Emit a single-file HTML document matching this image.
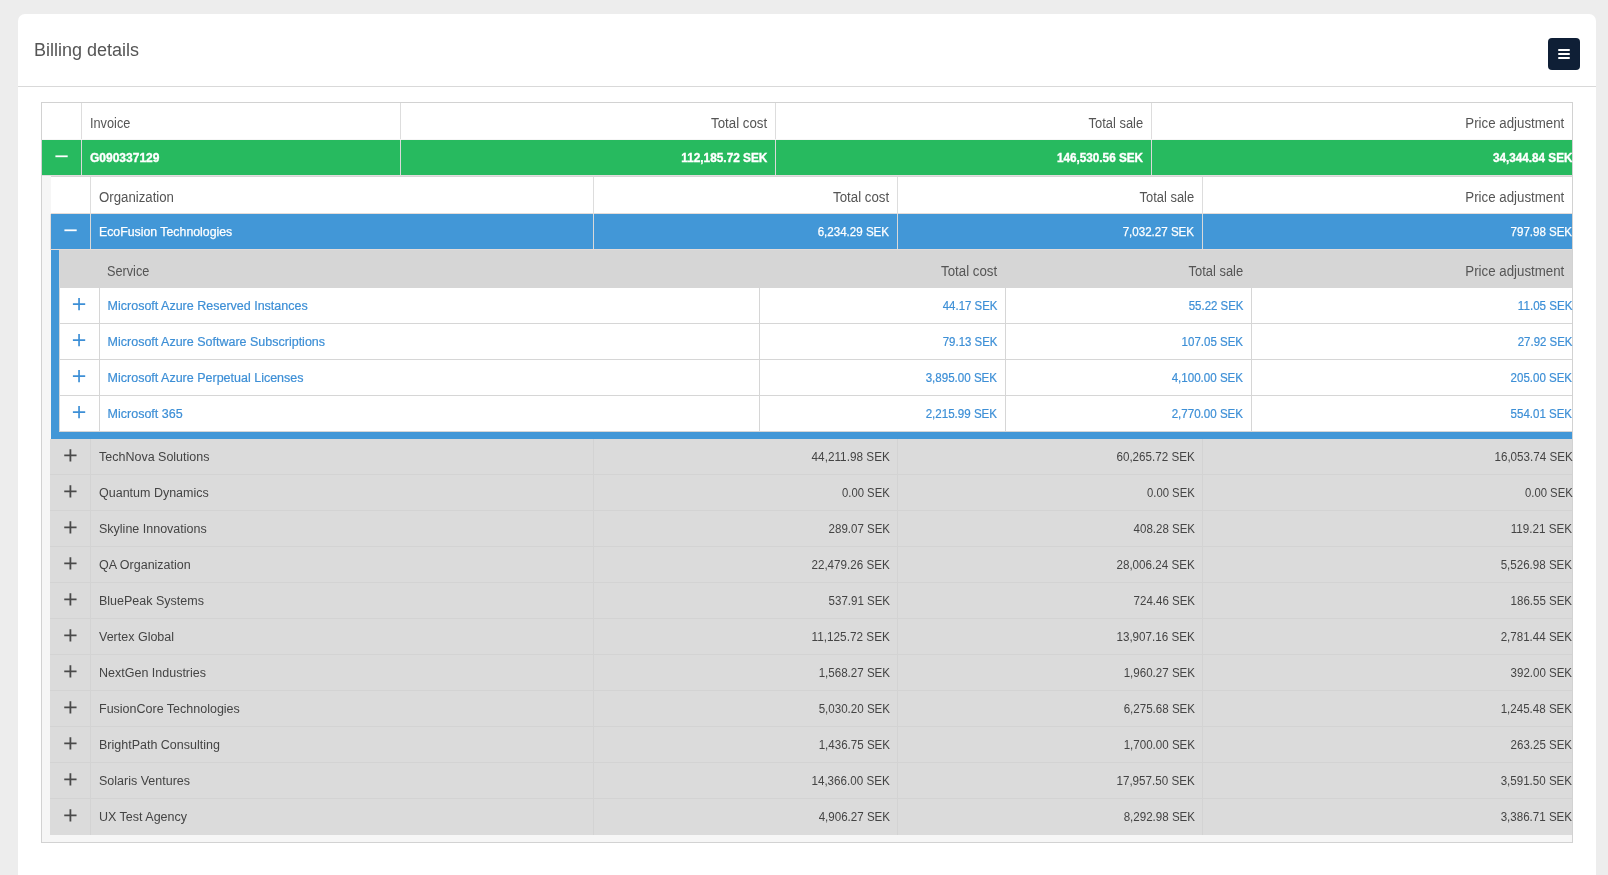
<!DOCTYPE html>
<html><head><meta charset="utf-8"><title>Billing details</title>
<style>
html,body{margin:0;padding:0;}
body{width:1608px;height:875px;overflow:hidden;background:#ededed;position:relative;font-family:"Liberation Sans", sans-serif;}
body>div,body>svg{position:absolute;}
.t{line-height:20px;white-space:nowrap;}
#wrap{position:absolute;left:0;top:0;width:1608px;height:875px;will-change:transform;}
#wrap>div,#wrap>svg{position:absolute;}
</style></head><body><div id="wrap">
<div style="left:18px;top:14px;width:1578px;height:900px;background:#ffffff;border-radius:7px;"></div>
<div style="left:18px;top:86px;width:1578px;height:1px;background:#d9d9d9;"></div>
<div class="t" style="left:34px;top:39.76px;font-size:18px;font-weight:400;color:#555;">Billing details</div>
<div style="left:1548px;top:38px;width:32px;height:32px;background:#0f1f36;border-radius:4px;"></div>
<div style="left:1558.3px;top:49px;width:11.4px;height:1.8px;background:#fff;border-radius:1px;"></div>
<div style="left:1558.3px;top:53px;width:11.4px;height:1.8px;background:#fff;border-radius:1px;"></div>
<div style="left:1558.3px;top:57px;width:11.4px;height:1.8px;background:#fff;border-radius:1px;"></div>
<div style="left:41px;top:102px;width:1532px;height:741px;background:#d2d2d2;"></div>
<div style="left:42px;top:103px;width:1530px;height:739px;background:#f6f6f6;"></div>
<div style="left:42px;top:103px;width:1530px;height:36px;background:#ffffff;"></div>
<div style="left:42px;top:140px;width:1530px;height:35px;background:#27ba5f;"></div>
<div style="left:42px;top:175px;width:1530px;height:1px;background:#e2dede;"></div>
<div style="left:81px;top:103px;width:1px;height:36px;background:#dddddd;"></div>
<div style="left:81px;top:140px;width:1px;height:35px;background:#d9d9d9;"></div>
<div style="left:400px;top:103px;width:1px;height:36px;background:#dddddd;"></div>
<div style="left:400px;top:140px;width:1px;height:35px;background:#d9d9d9;"></div>
<div style="left:775px;top:103px;width:1px;height:36px;background:#dddddd;"></div>
<div style="left:775px;top:140px;width:1px;height:35px;background:#d9d9d9;"></div>
<div style="left:1151px;top:103px;width:1px;height:36px;background:#dddddd;"></div>
<div style="left:1151px;top:140px;width:1px;height:35px;background:#d9d9d9;"></div>
<div class="t" style="left:90px;top:113.15px;font-size:14px;font-weight:400;color:#555555;transform:scaleX(0.9090);transform-origin:left center;">Invoice</div>
<div class="t" style="right:841px;top:113.15px;font-size:14px;font-weight:400;color:#555555;transform:scaleX(0.9490);transform-origin:right center;">Total cost</div>
<div class="t" style="right:465px;top:113.15px;font-size:14px;font-weight:400;color:#555555;transform:scaleX(0.9240);transform-origin:right center;">Total sale</div>
<div class="t" style="right:44px;top:113.15px;font-size:14px;font-weight:400;color:#555555;transform:scaleX(0.9490);transform-origin:right center;">Price adjustment</div>
<div class="t" style="left:90px;top:147.84px;font-size:12px;font-weight:700;color:#fff;-webkit-text-stroke:0.35px #fff;">G090337129</div>
<div class="t" style="right:841px;top:147.84px;font-size:12px;font-weight:700;color:#fff;transform:scaleX(0.9858);transform-origin:right center;-webkit-text-stroke:0.35px #fff;">112,185.72 SEK</div>
<div class="t" style="right:465px;top:147.84px;font-size:12px;font-weight:700;color:#fff;transform:scaleX(0.9783);transform-origin:right center;-webkit-text-stroke:0.35px #fff;">146,530.56 SEK</div>
<div class="t" style="right:36px;top:147.84px;font-size:12px;font-weight:700;color:#fff;transform:scaleX(0.9741);transform-origin:right center;-webkit-text-stroke:0.35px #fff;">34,344.84 SEK</div>
<svg style="left:53px;top:148px" width="16" height="16" viewBox="0 0 16 16"><path d="M2.40 8.30H14.70" stroke="#fff" stroke-width="1.8" fill="none"/></svg>
<div style="left:51px;top:176px;width:1522px;height:1px;background:#d5d5d5;"></div>
<div style="left:51px;top:177px;width:1521px;height:36px;background:#ffffff;"></div>
<div style="left:51px;top:213px;width:1521px;height:1px;background:#e3dcd9;"></div>
<div style="left:51px;top:214px;width:1521px;height:35px;background:#4297d7;"></div>
<div style="left:50px;top:249px;width:1522px;height:1px;background:#e3dcd9;"></div>
<div style="left:50px;top:214px;width:1px;height:35px;background:#e3dcd9;"></div>
<div style="left:90px;top:177px;width:1px;height:36px;background:#dddddd;"></div>
<div style="left:90px;top:214px;width:1px;height:35px;background:#d9d9d9;"></div>
<div style="left:593px;top:177px;width:1px;height:36px;background:#dddddd;"></div>
<div style="left:593px;top:214px;width:1px;height:35px;background:#d9d9d9;"></div>
<div style="left:897px;top:177px;width:1px;height:36px;background:#dddddd;"></div>
<div style="left:897px;top:214px;width:1px;height:35px;background:#d9d9d9;"></div>
<div style="left:1202px;top:177px;width:1px;height:36px;background:#dddddd;"></div>
<div style="left:1202px;top:214px;width:1px;height:35px;background:#d9d9d9;"></div>
<div class="t" style="left:99px;top:187.15px;font-size:14px;font-weight:400;color:#555555;transform:scaleX(0.9440);transform-origin:left center;">Organization</div>
<div class="t" style="right:719px;top:187.15px;font-size:14px;font-weight:400;color:#555555;transform:scaleX(0.9490);transform-origin:right center;">Total cost</div>
<div class="t" style="right:414px;top:187.15px;font-size:14px;font-weight:400;color:#555555;transform:scaleX(0.9240);transform-origin:right center;">Total sale</div>
<div class="t" style="right:44px;top:187.15px;font-size:14px;font-weight:400;color:#555555;transform:scaleX(0.9490);transform-origin:right center;">Price adjustment</div>
<div class="t" style="left:99px;top:221.67px;font-size:12.5px;font-weight:400;color:#fff;transform:scaleX(0.9850);transform-origin:left center;-webkit-text-stroke:0.25px #fff;">EcoFusion Technologies</div>
<div class="t" style="right:719px;top:221.84px;font-size:12px;font-weight:400;color:#fff;transform:scaleX(0.9645);transform-origin:right center;-webkit-text-stroke:0.25px #fff;">6,234.29 SEK</div>
<div class="t" style="right:414px;top:221.84px;font-size:12px;font-weight:400;color:#fff;transform:scaleX(0.9645);transform-origin:right center;-webkit-text-stroke:0.25px #fff;">7,032.27 SEK</div>
<div class="t" style="right:36px;top:221.84px;font-size:12px;font-weight:400;color:#fff;transform:scaleX(0.9595);transform-origin:right center;-webkit-text-stroke:0.25px #fff;">797.98 SEK</div>
<svg style="left:62px;top:222px" width="16" height="16" viewBox="0 0 16 16"><path d="M2.40 8.30H14.70" stroke="#fff" stroke-width="1.8" fill="none"/></svg>
<div style="left:51px;top:250px;width:1521px;height:189px;background:#4297d7;"></div>
<div style="left:59px;top:250px;width:1513px;height:38px;background:#d6d6d6;"></div>
<div style="left:59px;top:288px;width:1513px;height:144px;background:#d6d6d6;"></div>
<div class="t" style="left:107px;top:261.15px;font-size:14px;font-weight:400;color:#555555;transform:scaleX(0.9070);transform-origin:left center;">Service</div>
<div class="t" style="right:611px;top:261.15px;font-size:14px;font-weight:400;color:#555555;transform:scaleX(0.9490);transform-origin:right center;">Total cost</div>
<div class="t" style="right:365px;top:261.15px;font-size:14px;font-weight:400;color:#555555;transform:scaleX(0.9240);transform-origin:right center;">Total sale</div>
<div class="t" style="right:44px;top:261.15px;font-size:14px;font-weight:400;color:#555555;transform:scaleX(0.9490);transform-origin:right center;">Price adjustment</div>
<div style="left:60px;top:288px;width:39px;height:35px;background:#ffffff;"></div>
<div style="left:100px;top:288px;width:659px;height:35px;background:#ffffff;"></div>
<div style="left:760px;top:288px;width:245px;height:35px;background:#ffffff;"></div>
<div style="left:1006px;top:288px;width:245px;height:35px;background:#ffffff;"></div>
<div style="left:1252px;top:288px;width:320px;height:35px;background:#ffffff;"></div>
<div class="t" style="left:107.6px;top:295.67px;font-size:12.5px;font-weight:400;color:#3d8fd6;-webkit-text-stroke:0.2px #3d8fd6;">Microsoft Azure Reserved Instances</div>
<div class="t" style="right:611px;top:295.84px;font-size:12px;font-weight:400;color:#3d8fd6;transform:scaleX(0.9517);transform-origin:right center;-webkit-text-stroke:0.2px #3d8fd6;">44.17 SEK</div>
<div class="t" style="right:365px;top:295.84px;font-size:12px;font-weight:400;color:#3d8fd6;transform:scaleX(0.9517);transform-origin:right center;-webkit-text-stroke:0.2px #3d8fd6;">55.22 SEK</div>
<div class="t" style="right:36px;top:295.84px;font-size:12px;font-weight:400;color:#3d8fd6;transform:scaleX(0.9669);transform-origin:right center;-webkit-text-stroke:0.2px #3d8fd6;">11.05 SEK</div>
<svg style="left:71px;top:296px" width="16" height="16" viewBox="0 0 16 16"><path d="M1.90 8.20H14.20M8.05 2.05V14.35" stroke="#3d8fd6" stroke-width="1.7" fill="none"/></svg>
<div style="left:60px;top:324px;width:39px;height:35px;background:#ffffff;"></div>
<div style="left:100px;top:324px;width:659px;height:35px;background:#ffffff;"></div>
<div style="left:760px;top:324px;width:245px;height:35px;background:#ffffff;"></div>
<div style="left:1006px;top:324px;width:245px;height:35px;background:#ffffff;"></div>
<div style="left:1252px;top:324px;width:320px;height:35px;background:#ffffff;"></div>
<div class="t" style="left:107.6px;top:331.67px;font-size:12.5px;font-weight:400;color:#3d8fd6;-webkit-text-stroke:0.2px #3d8fd6;">Microsoft Azure Software Subscriptions</div>
<div class="t" style="right:611px;top:331.84px;font-size:12px;font-weight:400;color:#3d8fd6;transform:scaleX(0.9517);transform-origin:right center;-webkit-text-stroke:0.2px #3d8fd6;">79.13 SEK</div>
<div class="t" style="right:365px;top:331.84px;font-size:12px;font-weight:400;color:#3d8fd6;transform:scaleX(0.9595);transform-origin:right center;-webkit-text-stroke:0.2px #3d8fd6;">107.05 SEK</div>
<div class="t" style="right:36px;top:331.84px;font-size:12px;font-weight:400;color:#3d8fd6;transform:scaleX(0.9517);transform-origin:right center;-webkit-text-stroke:0.2px #3d8fd6;">27.92 SEK</div>
<svg style="left:71px;top:332px" width="16" height="16" viewBox="0 0 16 16"><path d="M1.90 8.20H14.20M8.05 2.05V14.35" stroke="#3d8fd6" stroke-width="1.7" fill="none"/></svg>
<div style="left:60px;top:360px;width:39px;height:35px;background:#ffffff;"></div>
<div style="left:100px;top:360px;width:659px;height:35px;background:#ffffff;"></div>
<div style="left:760px;top:360px;width:245px;height:35px;background:#ffffff;"></div>
<div style="left:1006px;top:360px;width:245px;height:35px;background:#ffffff;"></div>
<div style="left:1252px;top:360px;width:320px;height:35px;background:#ffffff;"></div>
<div class="t" style="left:107.6px;top:367.67px;font-size:12.5px;font-weight:400;color:#3d8fd6;-webkit-text-stroke:0.2px #3d8fd6;">Microsoft Azure Perpetual Licenses</div>
<div class="t" style="right:611px;top:367.84px;font-size:12px;font-weight:400;color:#3d8fd6;transform:scaleX(0.9645);transform-origin:right center;-webkit-text-stroke:0.2px #3d8fd6;">3,895.00 SEK</div>
<div class="t" style="right:365px;top:367.84px;font-size:12px;font-weight:400;color:#3d8fd6;transform:scaleX(0.9645);transform-origin:right center;-webkit-text-stroke:0.2px #3d8fd6;">4,100.00 SEK</div>
<div class="t" style="right:36px;top:367.84px;font-size:12px;font-weight:400;color:#3d8fd6;transform:scaleX(0.9595);transform-origin:right center;-webkit-text-stroke:0.2px #3d8fd6;">205.00 SEK</div>
<svg style="left:71px;top:368px" width="16" height="16" viewBox="0 0 16 16"><path d="M1.90 8.20H14.20M8.05 2.05V14.35" stroke="#3d8fd6" stroke-width="1.7" fill="none"/></svg>
<div style="left:60px;top:396px;width:39px;height:35px;background:#ffffff;"></div>
<div style="left:100px;top:396px;width:659px;height:35px;background:#ffffff;"></div>
<div style="left:760px;top:396px;width:245px;height:35px;background:#ffffff;"></div>
<div style="left:1006px;top:396px;width:245px;height:35px;background:#ffffff;"></div>
<div style="left:1252px;top:396px;width:320px;height:35px;background:#ffffff;"></div>
<div class="t" style="left:107.6px;top:403.67px;font-size:12.5px;font-weight:400;color:#3d8fd6;-webkit-text-stroke:0.2px #3d8fd6;">Microsoft 365</div>
<div class="t" style="right:611px;top:403.84px;font-size:12px;font-weight:400;color:#3d8fd6;transform:scaleX(0.9645);transform-origin:right center;-webkit-text-stroke:0.2px #3d8fd6;">2,215.99 SEK</div>
<div class="t" style="right:365px;top:403.84px;font-size:12px;font-weight:400;color:#3d8fd6;transform:scaleX(0.9645);transform-origin:right center;-webkit-text-stroke:0.2px #3d8fd6;">2,770.00 SEK</div>
<div class="t" style="right:36px;top:403.84px;font-size:12px;font-weight:400;color:#3d8fd6;transform:scaleX(0.9595);transform-origin:right center;-webkit-text-stroke:0.2px #3d8fd6;">554.01 SEK</div>
<svg style="left:71px;top:404px" width="16" height="16" viewBox="0 0 16 16"><path d="M1.90 8.20H14.20M8.05 2.05V14.35" stroke="#3d8fd6" stroke-width="1.7" fill="none"/></svg>
<div style="left:50px;top:439px;width:1522px;height:396px;background:#d3d3d3;"></div>
<div style="left:50px;top:439px;width:40px;height:35px;background:#dbdbdb;"></div>
<div style="left:91px;top:439px;width:502px;height:35px;background:#dbdbdb;"></div>
<div style="left:594px;top:439px;width:303px;height:35px;background:#dbdbdb;"></div>
<div style="left:898px;top:439px;width:304px;height:35px;background:#dbdbdb;"></div>
<div style="left:1203px;top:439px;width:369px;height:35px;background:#dbdbdb;"></div>
<div class="t" style="left:99px;top:446.67px;font-size:12.5px;font-weight:400;color:#444444;">TechNova Solutions</div>
<div class="t" style="right:718px;top:446.84px;font-size:12px;font-weight:400;color:#444444;transform:scaleX(0.9807);transform-origin:right center;">44,211.98 SEK</div>
<div class="t" style="right:413px;top:446.84px;font-size:12px;font-weight:400;color:#444444;transform:scaleX(0.9698);transform-origin:right center;">60,265.72 SEK</div>
<div class="t" style="right:35.5px;top:446.84px;font-size:12px;font-weight:400;color:#444444;transform:scaleX(0.9698);transform-origin:right center;">16,053.74 SEK</div>
<svg style="left:62px;top:447px" width="16" height="16" viewBox="0 0 16 16"><path d="M2.25 8.30H14.55M8.40 2.15V14.45" stroke="#4a4a4a" stroke-width="1.8" fill="none"/></svg>
<div style="left:50px;top:475px;width:40px;height:35px;background:#dbdbdb;"></div>
<div style="left:91px;top:475px;width:502px;height:35px;background:#dbdbdb;"></div>
<div style="left:594px;top:475px;width:303px;height:35px;background:#dbdbdb;"></div>
<div style="left:898px;top:475px;width:304px;height:35px;background:#dbdbdb;"></div>
<div style="left:1203px;top:475px;width:369px;height:35px;background:#dbdbdb;"></div>
<div class="t" style="left:99px;top:482.67px;font-size:12.5px;font-weight:400;color:#444444;">Quantum Dynamics</div>
<div class="t" style="right:718px;top:482.84px;font-size:12px;font-weight:400;color:#444444;transform:scaleX(0.9414);transform-origin:right center;">0.00 SEK</div>
<div class="t" style="right:413px;top:482.84px;font-size:12px;font-weight:400;color:#444444;transform:scaleX(0.9414);transform-origin:right center;">0.00 SEK</div>
<div class="t" style="right:35.5px;top:482.84px;font-size:12px;font-weight:400;color:#444444;transform:scaleX(0.9414);transform-origin:right center;">0.00 SEK</div>
<svg style="left:62px;top:483px" width="16" height="16" viewBox="0 0 16 16"><path d="M2.25 8.30H14.55M8.40 2.15V14.45" stroke="#4a4a4a" stroke-width="1.8" fill="none"/></svg>
<div style="left:50px;top:511px;width:40px;height:35px;background:#dbdbdb;"></div>
<div style="left:91px;top:511px;width:502px;height:35px;background:#dbdbdb;"></div>
<div style="left:594px;top:511px;width:303px;height:35px;background:#dbdbdb;"></div>
<div style="left:898px;top:511px;width:304px;height:35px;background:#dbdbdb;"></div>
<div style="left:1203px;top:511px;width:369px;height:35px;background:#dbdbdb;"></div>
<div class="t" style="left:99px;top:518.67px;font-size:12.5px;font-weight:400;color:#444444;">Skyline Innovations</div>
<div class="t" style="right:718px;top:518.84px;font-size:12px;font-weight:400;color:#444444;transform:scaleX(0.9595);transform-origin:right center;">289.07 SEK</div>
<div class="t" style="right:413px;top:518.84px;font-size:12px;font-weight:400;color:#444444;transform:scaleX(0.9595);transform-origin:right center;">408.28 SEK</div>
<div class="t" style="right:35.5px;top:518.84px;font-size:12px;font-weight:400;color:#444444;transform:scaleX(0.9732);transform-origin:right center;">119.21 SEK</div>
<svg style="left:62px;top:519px" width="16" height="16" viewBox="0 0 16 16"><path d="M2.25 8.30H14.55M8.40 2.15V14.45" stroke="#4a4a4a" stroke-width="1.8" fill="none"/></svg>
<div style="left:50px;top:547px;width:40px;height:35px;background:#dbdbdb;"></div>
<div style="left:91px;top:547px;width:502px;height:35px;background:#dbdbdb;"></div>
<div style="left:594px;top:547px;width:303px;height:35px;background:#dbdbdb;"></div>
<div style="left:898px;top:547px;width:304px;height:35px;background:#dbdbdb;"></div>
<div style="left:1203px;top:547px;width:369px;height:35px;background:#dbdbdb;"></div>
<div class="t" style="left:99px;top:554.67px;font-size:12.5px;font-weight:400;color:#444444;">QA Organization</div>
<div class="t" style="right:718px;top:554.84px;font-size:12px;font-weight:400;color:#444444;transform:scaleX(0.9698);transform-origin:right center;">22,479.26 SEK</div>
<div class="t" style="right:413px;top:554.84px;font-size:12px;font-weight:400;color:#444444;transform:scaleX(0.9698);transform-origin:right center;">28,006.24 SEK</div>
<div class="t" style="right:35.5px;top:554.84px;font-size:12px;font-weight:400;color:#444444;transform:scaleX(0.9645);transform-origin:right center;">5,526.98 SEK</div>
<svg style="left:62px;top:555px" width="16" height="16" viewBox="0 0 16 16"><path d="M2.25 8.30H14.55M8.40 2.15V14.45" stroke="#4a4a4a" stroke-width="1.8" fill="none"/></svg>
<div style="left:50px;top:583px;width:40px;height:35px;background:#dbdbdb;"></div>
<div style="left:91px;top:583px;width:502px;height:35px;background:#dbdbdb;"></div>
<div style="left:594px;top:583px;width:303px;height:35px;background:#dbdbdb;"></div>
<div style="left:898px;top:583px;width:304px;height:35px;background:#dbdbdb;"></div>
<div style="left:1203px;top:583px;width:369px;height:35px;background:#dbdbdb;"></div>
<div class="t" style="left:99px;top:590.67px;font-size:12.5px;font-weight:400;color:#444444;">BluePeak Systems</div>
<div class="t" style="right:718px;top:590.84px;font-size:12px;font-weight:400;color:#444444;transform:scaleX(0.9595);transform-origin:right center;">537.91 SEK</div>
<div class="t" style="right:413px;top:590.84px;font-size:12px;font-weight:400;color:#444444;transform:scaleX(0.9595);transform-origin:right center;">724.46 SEK</div>
<div class="t" style="right:35.5px;top:590.84px;font-size:12px;font-weight:400;color:#444444;transform:scaleX(0.9595);transform-origin:right center;">186.55 SEK</div>
<svg style="left:62px;top:591px" width="16" height="16" viewBox="0 0 16 16"><path d="M2.25 8.30H14.55M8.40 2.15V14.45" stroke="#4a4a4a" stroke-width="1.8" fill="none"/></svg>
<div style="left:50px;top:619px;width:40px;height:35px;background:#dbdbdb;"></div>
<div style="left:91px;top:619px;width:502px;height:35px;background:#dbdbdb;"></div>
<div style="left:594px;top:619px;width:303px;height:35px;background:#dbdbdb;"></div>
<div style="left:898px;top:619px;width:304px;height:35px;background:#dbdbdb;"></div>
<div style="left:1203px;top:619px;width:369px;height:35px;background:#dbdbdb;"></div>
<div class="t" style="left:99px;top:626.67px;font-size:12.5px;font-weight:400;color:#444444;">Vertex Global</div>
<div class="t" style="right:718px;top:626.84px;font-size:12px;font-weight:400;color:#444444;transform:scaleX(0.9807);transform-origin:right center;">11,125.72 SEK</div>
<div class="t" style="right:413px;top:626.84px;font-size:12px;font-weight:400;color:#444444;transform:scaleX(0.9698);transform-origin:right center;">13,907.16 SEK</div>
<div class="t" style="right:35.5px;top:626.84px;font-size:12px;font-weight:400;color:#444444;transform:scaleX(0.9645);transform-origin:right center;">2,781.44 SEK</div>
<svg style="left:62px;top:627px" width="16" height="16" viewBox="0 0 16 16"><path d="M2.25 8.30H14.55M8.40 2.15V14.45" stroke="#4a4a4a" stroke-width="1.8" fill="none"/></svg>
<div style="left:50px;top:655px;width:40px;height:35px;background:#dbdbdb;"></div>
<div style="left:91px;top:655px;width:502px;height:35px;background:#dbdbdb;"></div>
<div style="left:594px;top:655px;width:303px;height:35px;background:#dbdbdb;"></div>
<div style="left:898px;top:655px;width:304px;height:35px;background:#dbdbdb;"></div>
<div style="left:1203px;top:655px;width:369px;height:35px;background:#dbdbdb;"></div>
<div class="t" style="left:99px;top:662.67px;font-size:12.5px;font-weight:400;color:#444444;">NextGen Industries</div>
<div class="t" style="right:718px;top:662.84px;font-size:12px;font-weight:400;color:#444444;transform:scaleX(0.9645);transform-origin:right center;">1,568.27 SEK</div>
<div class="t" style="right:413px;top:662.84px;font-size:12px;font-weight:400;color:#444444;transform:scaleX(0.9645);transform-origin:right center;">1,960.27 SEK</div>
<div class="t" style="right:35.5px;top:662.84px;font-size:12px;font-weight:400;color:#444444;transform:scaleX(0.9595);transform-origin:right center;">392.00 SEK</div>
<svg style="left:62px;top:663px" width="16" height="16" viewBox="0 0 16 16"><path d="M2.25 8.30H14.55M8.40 2.15V14.45" stroke="#4a4a4a" stroke-width="1.8" fill="none"/></svg>
<div style="left:50px;top:691px;width:40px;height:35px;background:#dbdbdb;"></div>
<div style="left:91px;top:691px;width:502px;height:35px;background:#dbdbdb;"></div>
<div style="left:594px;top:691px;width:303px;height:35px;background:#dbdbdb;"></div>
<div style="left:898px;top:691px;width:304px;height:35px;background:#dbdbdb;"></div>
<div style="left:1203px;top:691px;width:369px;height:35px;background:#dbdbdb;"></div>
<div class="t" style="left:99px;top:698.67px;font-size:12.5px;font-weight:400;color:#444444;">FusionCore Technologies</div>
<div class="t" style="right:718px;top:698.84px;font-size:12px;font-weight:400;color:#444444;transform:scaleX(0.9645);transform-origin:right center;">5,030.20 SEK</div>
<div class="t" style="right:413px;top:698.84px;font-size:12px;font-weight:400;color:#444444;transform:scaleX(0.9645);transform-origin:right center;">6,275.68 SEK</div>
<div class="t" style="right:35.5px;top:698.84px;font-size:12px;font-weight:400;color:#444444;transform:scaleX(0.9645);transform-origin:right center;">1,245.48 SEK</div>
<svg style="left:62px;top:699px" width="16" height="16" viewBox="0 0 16 16"><path d="M2.25 8.30H14.55M8.40 2.15V14.45" stroke="#4a4a4a" stroke-width="1.8" fill="none"/></svg>
<div style="left:50px;top:727px;width:40px;height:35px;background:#dbdbdb;"></div>
<div style="left:91px;top:727px;width:502px;height:35px;background:#dbdbdb;"></div>
<div style="left:594px;top:727px;width:303px;height:35px;background:#dbdbdb;"></div>
<div style="left:898px;top:727px;width:304px;height:35px;background:#dbdbdb;"></div>
<div style="left:1203px;top:727px;width:369px;height:35px;background:#dbdbdb;"></div>
<div class="t" style="left:99px;top:734.67px;font-size:12.5px;font-weight:400;color:#444444;">BrightPath Consulting</div>
<div class="t" style="right:718px;top:734.84px;font-size:12px;font-weight:400;color:#444444;transform:scaleX(0.9645);transform-origin:right center;">1,436.75 SEK</div>
<div class="t" style="right:413px;top:734.84px;font-size:12px;font-weight:400;color:#444444;transform:scaleX(0.9645);transform-origin:right center;">1,700.00 SEK</div>
<div class="t" style="right:35.5px;top:734.84px;font-size:12px;font-weight:400;color:#444444;transform:scaleX(0.9595);transform-origin:right center;">263.25 SEK</div>
<svg style="left:62px;top:735px" width="16" height="16" viewBox="0 0 16 16"><path d="M2.25 8.30H14.55M8.40 2.15V14.45" stroke="#4a4a4a" stroke-width="1.8" fill="none"/></svg>
<div style="left:50px;top:763px;width:40px;height:35px;background:#dbdbdb;"></div>
<div style="left:91px;top:763px;width:502px;height:35px;background:#dbdbdb;"></div>
<div style="left:594px;top:763px;width:303px;height:35px;background:#dbdbdb;"></div>
<div style="left:898px;top:763px;width:304px;height:35px;background:#dbdbdb;"></div>
<div style="left:1203px;top:763px;width:369px;height:35px;background:#dbdbdb;"></div>
<div class="t" style="left:99px;top:770.67px;font-size:12.5px;font-weight:400;color:#444444;">Solaris Ventures</div>
<div class="t" style="right:718px;top:770.84px;font-size:12px;font-weight:400;color:#444444;transform:scaleX(0.9698);transform-origin:right center;">14,366.00 SEK</div>
<div class="t" style="right:413px;top:770.84px;font-size:12px;font-weight:400;color:#444444;transform:scaleX(0.9698);transform-origin:right center;">17,957.50 SEK</div>
<div class="t" style="right:35.5px;top:770.84px;font-size:12px;font-weight:400;color:#444444;transform:scaleX(0.9645);transform-origin:right center;">3,591.50 SEK</div>
<svg style="left:62px;top:771px" width="16" height="16" viewBox="0 0 16 16"><path d="M2.25 8.30H14.55M8.40 2.15V14.45" stroke="#4a4a4a" stroke-width="1.8" fill="none"/></svg>
<div style="left:50px;top:799px;width:40px;height:36px;background:#dbdbdb;"></div>
<div style="left:91px;top:799px;width:502px;height:36px;background:#dbdbdb;"></div>
<div style="left:594px;top:799px;width:303px;height:36px;background:#dbdbdb;"></div>
<div style="left:898px;top:799px;width:304px;height:36px;background:#dbdbdb;"></div>
<div style="left:1203px;top:799px;width:369px;height:36px;background:#dbdbdb;"></div>
<div class="t" style="left:99px;top:806.67px;font-size:12.5px;font-weight:400;color:#444444;">UX Test Agency</div>
<div class="t" style="right:718px;top:806.84px;font-size:12px;font-weight:400;color:#444444;transform:scaleX(0.9645);transform-origin:right center;">4,906.27 SEK</div>
<div class="t" style="right:413px;top:806.84px;font-size:12px;font-weight:400;color:#444444;transform:scaleX(0.9645);transform-origin:right center;">8,292.98 SEK</div>
<div class="t" style="right:35.5px;top:806.84px;font-size:12px;font-weight:400;color:#444444;transform:scaleX(0.9645);transform-origin:right center;">3,386.71 SEK</div>
<svg style="left:62px;top:807px" width="16" height="16" viewBox="0 0 16 16"><path d="M2.25 8.30H14.55M8.40 2.15V14.45" stroke="#4a4a4a" stroke-width="1.8" fill="none"/></svg>
</div></body></html>
